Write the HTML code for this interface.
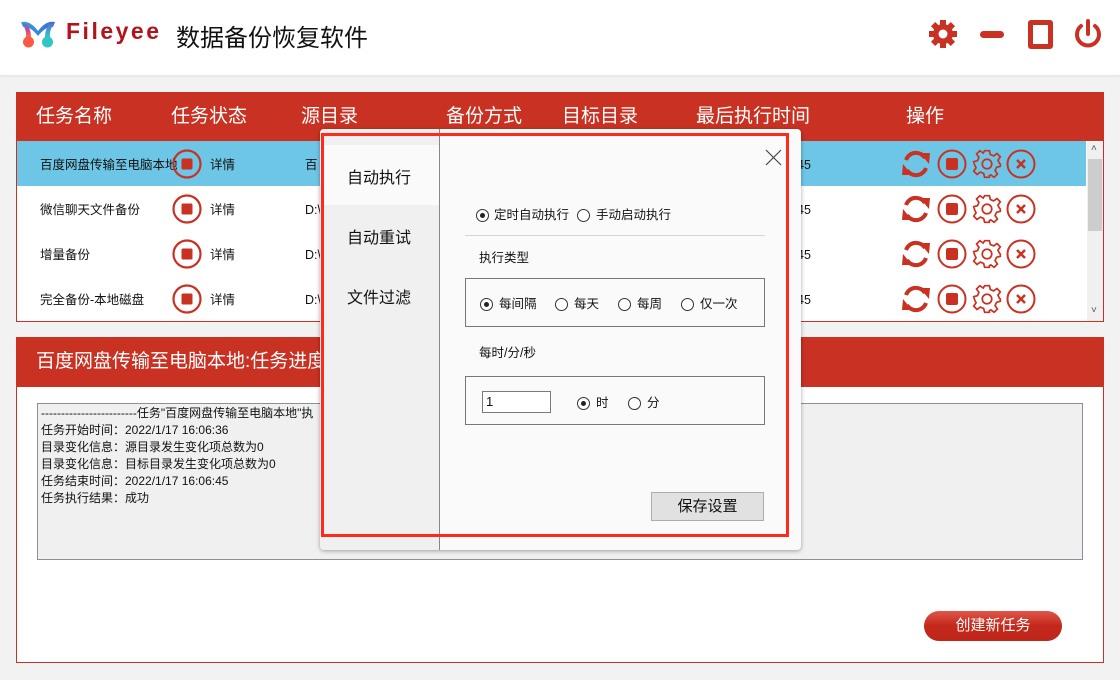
<!DOCTYPE html>
<html><head><meta charset="utf-8"><style>
*{margin:0;padding:0;box-sizing:border-box}
body{width:1120px;height:680px;background:#f2f2f2;font-family:"Liberation Sans","Noto Sans CJK SC",sans-serif;position:relative;overflow:hidden;color:#111}
.a{position:absolute;white-space:nowrap}
.hdr{left:0;top:0;width:1120px;height:75px;background:#fff;box-shadow:0 1px 3px rgba(0,0,0,.08)}
.red{background:#c93222}
.th{color:#fff;font-size:19px;top:104px;line-height:26px}
.row{left:17px;width:1069px;height:45px}
.rt{font-size:12.5px;line-height:16px}
.rad{position:absolute;width:13px;height:13px;border:1px solid #333;border-radius:50%;background:#fff}
.rad.on::after{content:"";position:absolute;left:3px;top:3px;width:5px;height:5px;border-radius:50%;background:#222}
.dt{font-size:12.5px;line-height:16px}
.log{font-size:12px;line-height:17px;left:41px}
</style></head><body>
<div class="a hdr"></div>
<svg class="a" style="left:19px;top:19px" width="38" height="30" viewBox="0 0 38 30"><defs><linearGradient id="g1" x1="0" y1="0" x2="0" y2="1"><stop offset="0" stop-color="#3a8ad8"/><stop offset=".5" stop-color="#d0409a"/><stop offset="1" stop-color="#ff6a3a"/></linearGradient><linearGradient id="g2" x1="0" y1="0" x2="0" y2="1"><stop offset="0" stop-color="#5a6ad8"/><stop offset="1" stop-color="#2fc9c0"/></linearGradient><linearGradient id="g3" x1="0" y1="0" x2="1" y2="0"><stop offset="0" stop-color="#3aa0d8"/><stop offset="1" stop-color="#3a6ad8"/></linearGradient></defs>
<path d="M2 3 Q11 1 19 12 Q27 1 36 3 L34 8 Q27 7 19 17 Q11 7 4 8 Z" fill="url(#g3)"/>
<path d="M3 4 Q8 12 7 18 L12 18 Q12 11 8 5 Z" fill="url(#g1)"/><circle cx="9.5" cy="23" r="5.5" fill="#fa5a44"/>
<path d="M35 4 Q30 12 31 18 L26 18 Q26 11 30 5 Z" fill="url(#g2)"/><circle cx="28.5" cy="23" r="5.5" fill="#2fc6c6"/></svg>
<div class="a" style="left:66px;top:18px;font-size:23px;font-weight:bold;color:#b3141c;letter-spacing:2.5px">Fileyee</div>
<div class="a" style="left:176px;top:18px;font-size:24px;color:#111">数据备份恢复软件</div>
<svg class="a" style="left:928px;top:19px" width="30" height="30" viewBox="0 0 30 30"><g fill="#c93222"><circle cx="15" cy="15" r="10"/><g id="t"><rect x="12" y="1" width="6" height="6"/><rect x="12" y="23" width="6" height="6"/><rect x="1" y="12" width="6" height="6"/><rect x="23" y="12" width="6" height="6"/></g><use href="#t" transform="rotate(45 15 15)"/></g><circle cx="15" cy="15" r="4.5" fill="#fff"/></svg>
<div class="a" style="left:980px;top:31px;width:24px;height:7px;border-radius:4px;background:#c93222"></div>
<div class="a" style="left:1028px;top:20px;width:25px;height:29px;border:5px solid #c93222;border-radius:3px"></div>
<svg class="a" style="left:1072px;top:18px" width="32" height="32" viewBox="0 0 32 32"><path d="M9 8 A11 11 0 1 0 23 8" fill="none" stroke="#c93222" stroke-width="4" stroke-linecap="round"/><line x1="16" y1="3" x2="16" y2="16" stroke="#c93222" stroke-width="4" stroke-linecap="round"/></svg>

<div class="a" style="left:16px;top:92px;width:1088px;height:230px;background:#fff;border:1px solid #c93222"></div>
<div class="a red" style="left:16px;top:92px;width:1088px;height:49px"></div>
<div class="a th" style="left:36px">任务名称</div><div class="a th" style="left:171px">任务状态</div><div class="a th" style="left:301px">源目录</div><div class="a th" style="left:446px">备份方式</div><div class="a th" style="left:562px">目标目录</div><div class="a th" style="left:696px">最后执行时间</div><div class="a th" style="left:906px">操作</div>
<div class="a row" style="top:141px;background:#6ec6e6"></div>
<div class="a" style="left:1087px;top:142px;width:16px;height:179px;background:#f0f0f0"></div>
<div class="a" style="left:1088px;top:159px;width:14px;height:72px;background:#cdcdcd"></div>
<div class="a" style="left:1091px;top:143px;font-size:10px;color:#555">˄</div>
<div class="a" style="left:1091px;top:305px;font-size:10px;color:#555">˅</div>

<div id="rows"></div>

<div class="a" style="left:16px;top:337px;width:1088px;height:326px;background:#fff;border:1px solid #c93222"></div>
<div class="a red" style="left:16px;top:337px;width:1088px;height:50px"></div>
<div class="a" style="left:36px;top:349px;color:#fff;font-size:19px;line-height:26px">百度网盘传输至电脑本地:任务进度</div>
<div class="a" style="left:37px;top:403px;width:1046px;height:157px;background:#f0f0f0;border:1px solid #8a8f98"></div>
<div class="a log" style="top:405px">------------------------任务"百度网盘传输至电脑本地"执</div>
<div class="a log" style="top:422px">任务开始时间：2022/1/17 16:06:36</div>
<div class="a log" style="top:439px">目录变化信息：源目录发生变化项总数为0</div>
<div class="a log" style="top:456px">目录变化信息：目标目录发生变化项总数为0</div>
<div class="a log" style="top:473px">任务结束时间：2022/1/17 16:06:45</div>
<div class="a log" style="top:490px">任务执行结果：成功</div>
<div class="a" style="left:924px;top:611px;width:138px;height:30px;border-radius:15px;background:linear-gradient(#e0574a,#c2281b 50%,#c0261a);color:#fff;font-size:15px;text-align:center;line-height:30px">创建新任务</div>

<div class="a" style="left:320px;top:129px;width:481px;height:421px;background:#fafafa;border-radius:4px;box-shadow:0 1px 4px rgba(0,0,0,.35)"></div>
<div class="a" style="left:320px;top:129px;width:120px;height:421px;background:#f0f0f0;border-right:1px solid #888;border-radius:4px 0 0 4px"></div>
<div class="a" style="left:324px;top:145px;width:115px;height:60px;background:#fafafa"></div>
<div class="a" style="left:347px;top:164px;font-size:16px">自动执行</div>
<div class="a" style="left:347px;top:224px;font-size:16px">自动重试</div>
<div class="a" style="left:347px;top:284px;font-size:16px">文件过滤</div>
<svg class="a" style="left:765px;top:149px" width="17" height="17"><path d="M1 1L16 16M16 1L1 16" stroke="#444" stroke-width="1.2"/></svg>
<div class="rad on" style="left:476px;top:209px"></div><div class="a dt" style="left:494px;top:207px">定时自动执行</div>
<div class="rad" style="left:577px;top:209px"></div><div class="a dt" style="left:596px;top:207px">手动启动执行</div>
<div class="a" style="left:465px;top:235px;width:300px;height:1px;background:#d4d4d4"></div>
<div class="a dt" style="left:479px;top:250px">执行类型</div>
<div class="a" style="left:465px;top:278px;width:300px;height:49px;border:1px solid #777"></div>
<div class="rad on" style="left:480px;top:298px"></div><div class="a dt" style="left:499px;top:296px">每间隔</div>
<div class="rad" style="left:555px;top:298px"></div><div class="a dt" style="left:574px;top:296px">每天</div>
<div class="rad" style="left:618px;top:298px"></div><div class="a dt" style="left:637px;top:296px">每周</div>
<div class="rad" style="left:681px;top:298px"></div><div class="a dt" style="left:700px;top:296px">仅一次</div>
<div class="a dt" style="left:479px;top:345px">每时/分/秒</div>
<div class="a" style="left:465px;top:376px;width:300px;height:49px;border:1px solid #777"></div>
<div class="a" style="left:482px;top:391px;width:69px;height:22px;border:1px solid #7a7a7a;background:#fff;font-size:13px;padding-left:3px;line-height:20px">1</div>
<div class="rad on" style="left:577px;top:397px"></div><div class="a dt" style="left:596px;top:395px">时</div>
<div class="rad" style="left:628px;top:397px"></div><div class="a dt" style="left:647px;top:395px">分</div>
<div class="a" style="left:651px;top:492px;width:113px;height:29px;background:#e1e1e1;border:1px solid #adadad;font-size:15px;text-align:center;line-height:27px">保存设置</div>
<div class="a" style="left:321px;top:133px;width:468px;height:404px;border:3px solid #ff2a1a"></div>

<script>
var names=["百度网盘传输至电脑本地","微信聊天文件备份","增量备份","完全备份-本地磁盘"];
var src=["百","D:\\","D:\\","D:\\"];
var h="";
var ic=function(x,y){
 var c="#c93222";
 return '<svg class="a" style="left:'+(x-17)+'px;top:'+(y-17)+'px" width="140" height="34" viewBox="0 0 140 34">'+
 '<g fill="none" stroke="'+c+'" stroke-width="4"><path d="M7 13 A10.5 10.5 0 0 1 26 11"/><path d="M27 21 A10.5 10.5 0 0 1 8 23"/></g>'+
 '<path d="M21 6 L31 6 L30 17 Z M13 28 L3 28 L4 17 Z" fill="'+c+'"/>'+
 '<circle cx="53" cy="17" r="13.5" fill="none" stroke="'+c+'" stroke-width="2"/><rect x="47" y="11" width="12" height="12" rx="2" fill="'+c+'"/>'+
 '<g transform="translate(88 17) scale(0.95)" fill="none" stroke="'+c+'" stroke-width="1.8"><path d="M-2.5 -14 L2.5 -14 L3.5 -10 L7 -8.5 L10.5 -11 L14 -7.5 L11.5 -4 L13 -1 L14 0 L14 2.5 L10 3.5 L8.5 7 L11 10.5 L7.5 14 L4 11.5 L2.5 12.3 L2.5 14 L-2.5 14 L-3.5 10 L-7 8.5 L-10.5 11 L-14 7.5 L-11.5 4 L-13 1 L-14 -2.5 L-10 -3.5 L-8.5 -7 L-11 -10.5 L-7.5 -14 L-4 -11.5 Z"/><circle r="5"/></g>'+
 '<circle cx="122" cy="17" r="13.5" fill="none" stroke="'+c+'" stroke-width="2"/><path d="M118 13L126 21M126 13L118 21" stroke="'+c+'" stroke-width="2.5"/>'+
 '</svg>';
};
for(var i=0;i<4;i++){
 var y=141+45*i, cy=y+23;
 h+='<div class="a rt" style="left:40px;top:'+(cy-7)+'px">'+names[i]+'</div>';
 h+='<svg class="a" style="left:172px;top:'+(cy-15)+'px" width="30" height="30"><circle cx="15" cy="15" r="13.5" fill="none" stroke="#c93222" stroke-width="2.2"/><rect x="9.5" y="9.5" width="11" height="11" rx="1.5" fill="#c93222"/></svg>';
 h+='<div class="a rt" style="left:210px;top:'+(cy-7)+'px">详情</div>';
 h+='<div class="a rt" style="left:305px;top:'+(cy-7)+'px">'+src[i]+'</div>';
 h+='<div class="a rt" style="left:797px;top:'+(cy-7)+'px">45</div>';
 h+=ic(916,cy);
}
document.getElementById("rows").innerHTML=h;
</script>
</body></html>
